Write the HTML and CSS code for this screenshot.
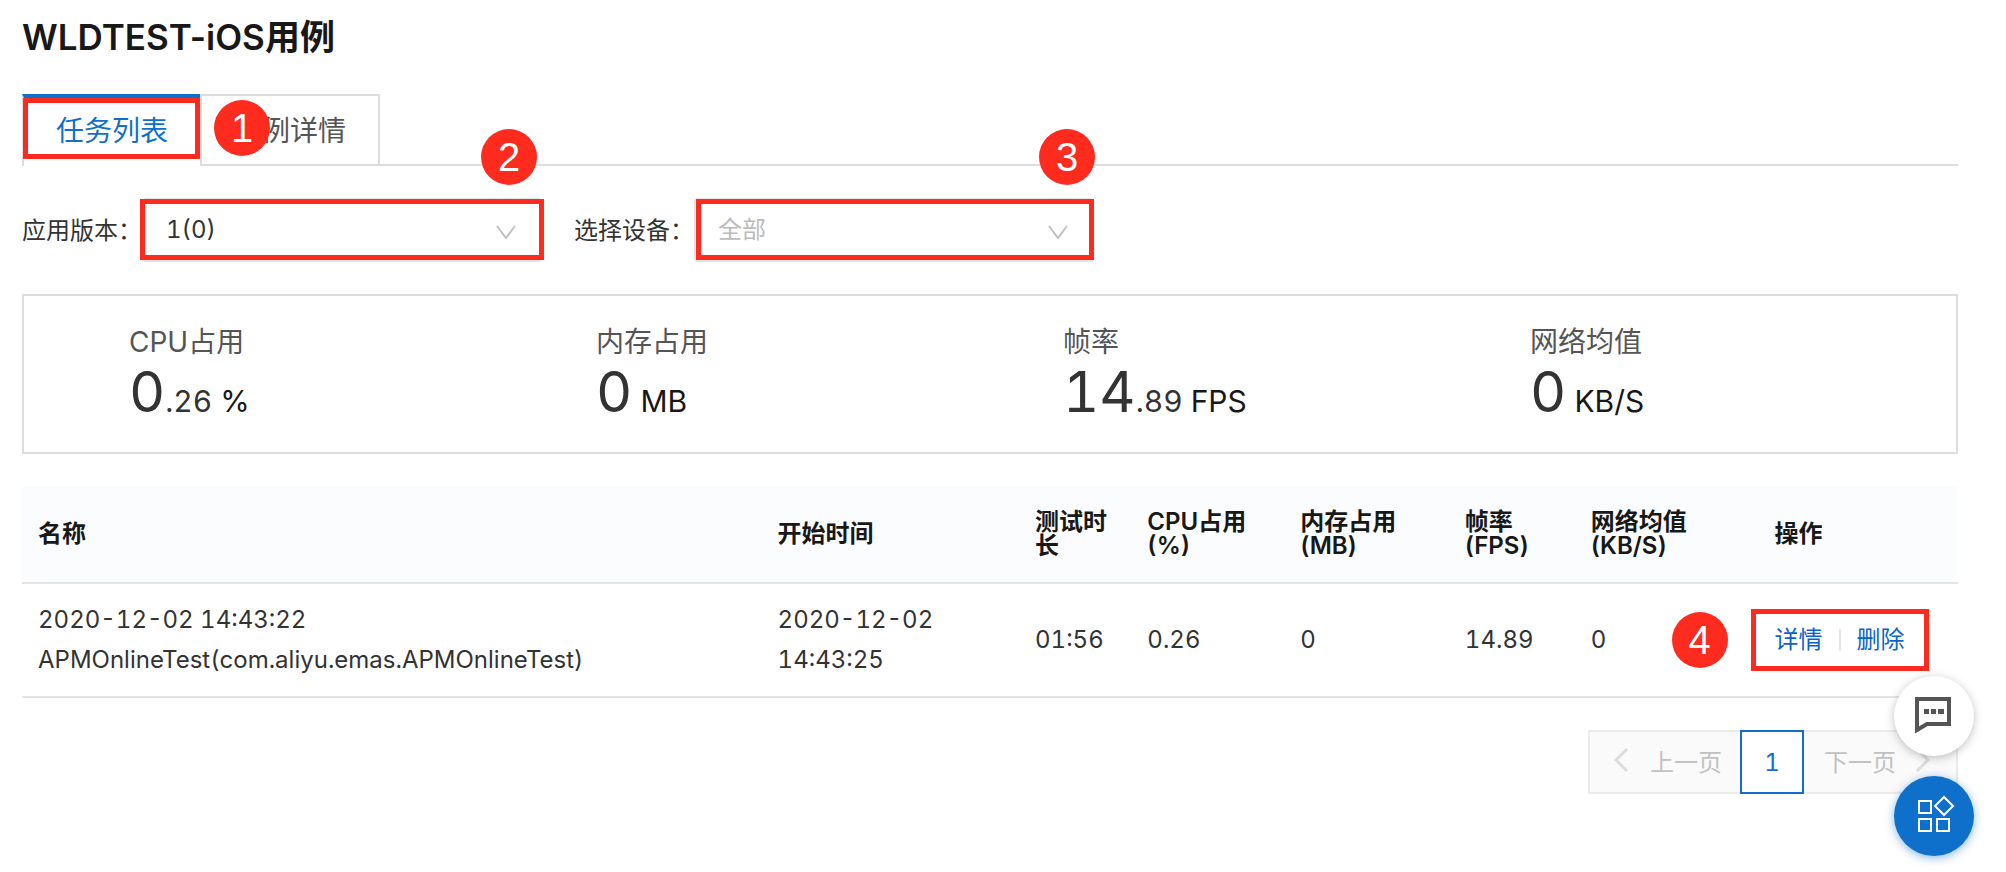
FILE: index.html
```html
<!DOCTYPE html>
<html lang="zh-CN">
<head>
    <meta charset="UTF-8">
    <meta name="viewport" content="width=device-width, initial-scale=1.0">
    <title>WLDTEST-iOS用例</title>
    <link rel="stylesheet" href="styles.css">
</head>
<body>
    <main class="page">
        <h1 class="page-title">WLDTEST-iOS用例</h1>

        <div class="tabs" role="tablist">
            <button class="tab tab-active" role="tab" aria-selected="true">任务列表<span class="mark mark-tab"></span></button>
            <button class="tab" role="tab" aria-selected="false">用例详情<span class="step step-1">1</span></button>
        </div>

        <div class="filters">
            <label class="filter-label" for="app-version">应用版本：</label>
            <div class="select-wrap">
                <select id="app-version">
                    <option>1(0)</option>
                </select>
                <svg class="chevron" viewBox="0 0 20 14"><path d="M1 1l9 12 9-12"/></svg>
                <span class="mark mark-version"></span>
                <span class="step step-2">2</span>
            </div>
            <label class="filter-label" for="device">选择设备：</label>
            <div class="select-wrap">
                <select id="device" class="placeholder">
                    <option>全部</option>
                </select>
                <svg class="chevron" viewBox="0 0 20 14"><path d="M1 1l9 12 9-12"/></svg>
                <span class="mark mark-device"></span>
                <span class="step step-3">3</span>
            </div>
        </div>

        <section class="stats">
            <div class="stat">
                <div class="stat-label">CPU占用</div>
                <div class="stat-value"><span class="stat-int">0</span>.26 <span class="stat-unit">%</span></div>
            </div>
            <div class="stat">
                <div class="stat-label">内存占用</div>
                <div class="stat-value"><span class="stat-int">0</span> <span class="stat-unit">MB</span></div>
            </div>
            <div class="stat">
                <div class="stat-label">帧率</div>
                <div class="stat-value"><span class="stat-int">14</span>.89 <span class="stat-unit">FPS</span></div>
            </div>
            <div class="stat">
                <div class="stat-label">网络均值</div>
                <div class="stat-value"><span class="stat-int">0</span> <span class="stat-unit">KB/S</span></div>
            </div>
        </section>

        <table class="task-table">
            <colgroup>
                <col class="col-name">
                <col class="col-start">
                <col class="col-duration">
                <col class="col-cpu">
                <col class="col-memory">
                <col class="col-fps">
                <col class="col-network">
                <col class="col-actions">
            </colgroup>
            <thead>
                <tr>
                    <th>名称</th>
                    <th>开始时间</th>
                    <th>测试时长</th>
                    <th>CPU占用<br>(%)</th>
                    <th>内存占用<br>(MB)</th>
                    <th>帧率<br>(FPS)</th>
                    <th>网络均值<br>(KB/S)</th>
                    <th>操作</th>
                </tr>
            </thead>
            <tbody>
                <tr>
                    <td>2020-12-02 14:43:22<br>APMOnlineTest(com.aliyu.emas.APMOnlineTest)</td>
                    <td>2020-12-02<br>14:43:25</td>
                    <td>01:56</td>
                    <td>0.26</td>
                    <td>0</td>
                    <td>14.89</td>
                    <td>0</td>
                    <td>
                        <div class="actions">
                            <a href="#">详情</a>
                            <span class="divider"></span>
                            <a href="#">删除</a>
                            <span class="mark mark-actions"></span>
                            <span class="step step-4">4</span>
                        </div>
                    </td>
                </tr>
            </tbody>
        </table>

        <nav class="pagination">
            <button class="page-btn page-prev" disabled>
                <svg class="arrow" viewBox="0 0 14 24"><path d="M13 1L2 12l11 11"/></svg>
                上一页
            </button>
            <button class="page-btn page-current">1</button>
            <button class="page-btn page-next" disabled>
                下一页
                <svg class="arrow" viewBox="0 0 14 24"><path d="M1 1l11 11L1 23"/></svg>
            </button>
        </nav>
    </main>

    <div class="float-tools">
        <button class="float-btn" aria-label="反馈">
            <svg width="36" height="36" viewBox="0 0 36 36">
                <path d="M1 1h32v25H11L1 32z" fill="none" stroke="#555" stroke-width="4"/>
                <path d="M8 11h5v5H8zM15 11h5v5h-5zM22 11h6v5h-6z" fill="#555"/>
            </svg>
        </button>
        <button class="float-btn float-btn-primary" aria-label="应用">
            <svg width="36" height="36" viewBox="0 0 36 36" fill="none" stroke="#fff" stroke-width="2">
                <path d="M3 3h12v12H3zM3 21h12v12H3zM21 21h12v12H21zM28-1l9 9-9 9-9-9z"/>
            </svg>
        </button>
    </div>
</body>
</html>
```
FILE: styles.css
```css
* {
    box-sizing: border-box;
}

body {
    margin: 0;
    background-color: #fff;
    font-family: Inter, "Noto Sans CJK SC", sans-serif;
    font-size: 24px;
    font-variant-numeric: tabular-nums;
    color: #333;
}

button,
select {
    font-family: inherit;
    font-size: inherit;
    font-variant-numeric: inherit;
    color: inherit;
}

button {
    cursor: pointer;
}

.page {
    padding: 15px 48px 0 22px;
}

.page-title {
    margin: 0 0 35px;
    font-size: 35px;
    line-height: 44px;
    font-weight: 600;
    font-variant-numeric: normal;
    color: #181818;
}

/* Tabs */
.tabs {
    display: flex;
    border-bottom: 2px solid #ddd;
}

.tab {
    position: relative;
    height: 70px;
    padding: 0 32px 2px;
    border: 2px solid #ddd;
    border-bottom: none;
    background-color: #fff;
    font-size: 28px;
    color: #555;
}

.tab-active {
    height: 72px;
    margin-bottom: -2px;
    padding-bottom: 6px;
    border-top: 4px solid #0f70cb;
    border-right: none;
    color: #0f70cb;
}

/* Red outlines and numbered steps */
.mark {
    position: absolute;
    border: 5px solid #ff2b1e;
    pointer-events: none;
}

.mark-tab {
    top: 0;
    right: 0;
    bottom: 7px;
    left: -1px;
}

.mark-version {
    inset: 1px -2px 2px -2px;
}

.mark-device {
    inset: 1px 0 2px 2px;
}

.mark-actions {
    inset: -11px -24px;
}

.step {
    position: absolute;
    z-index: 2;
    width: 56px;
    height: 56px;
    border-radius: 50%;
    background-color: #ff2b1e;
    font-family: "Liberation Sans", Arial, sans-serif;
    font-size: 40px;
    line-height: 56px;
    text-align: center;
    color: #fff;
}

.step-1 {
    top: 4px;
    left: 12px;
}

.step-2 {
    top: -69px;
    right: 5px;
}

.step-3 {
    top: -69px;
    right: -1px;
}

.step-4 {
    top: -8px;
    left: -103px;
}

/* Filters */
.filters {
    display: flex;
    align-items: center;
    margin: 32px 0;
}

.filter-label {
    width: 120px;
    padding-bottom: 4px;
}

.select-wrap {
    position: relative;
    width: 400px;
    margin-right: 32px;
}

.select-wrap select {
    display: block;
    width: 100%;
    height: 64px;
    padding: 0 22px 2px;
    border: 2px solid #e0e2e4;
    border-radius: 4px;
    background-color: #fff;
    appearance: none;
}

.select-wrap .placeholder {
    color: #bbb;
}

.chevron {
    position: absolute;
    top: 27px;
    right: 26px;
    width: 20px;
    height: 14px;
    fill: none;
    stroke: #c0c0c0;
    stroke-width: 2;
    pointer-events: none;
}

/* Stats */
.stats {
    display: flex;
    padding: 28px 32px 20px;
    border: 2px solid #ddd;
}

.stat {
    flex: 1;
    padding-left: 73px;
}

.stat-label {
    font-size: 28px;
    line-height: 36px;
    color: #555;
}

.stat-value {
    height: 72px;
    font-size: 30px;
    line-height: 64px;
}

.stat-int {
    font-size: 56px;
}

.stat-unit {
    color: #181818;
}

/* Task table */
.task-table {
    width: 100%;
    margin-top: 32px;
    border-collapse: collapse;
    table-layout: fixed;
}

.col-name {
    width: 38.2%;
}

.col-start {
    width: 13.3%;
}

.col-duration {
    width: 5.8%;
}

.col-cpu {
    width: 7.9%;
}

.col-memory {
    width: 8.5%;
}

.col-fps {
    width: 6.5%;
}

.col-network {
    width: 9.5%;
}

.col-actions {
    width: 10.3%;
}

.task-table th,
.task-table td {
    padding: 16px 0 16px 16px;
    border-bottom: 2px solid #e3e4e6;
    text-align: left;
}

.task-table th {
    height: 97px;
    padding-right: 16px;
    background-color: #fbfcfe;
    font-weight: 600;
    line-height: 24px;
    color: #181818;
}

.task-table th:nth-child(n+4) {
    padding-right: 0;
}

.task-table td {
    line-height: 40px;
}

.actions {
    position: relative;
    display: inline-flex;
    align-items: center;
}

.actions a {
    color: #0a64c8;
    text-decoration: none;
}

.divider {
    width: 2px;
    height: 22px;
    margin: 0 16px;
    background-color: #e3e4e6;
}

/* Pagination */
.pagination {
    display: flex;
    justify-content: flex-end;
    margin-top: 32px;
}

.page-btn {
    display: flex;
    align-items: center;
    justify-content: center;
    height: 64px;
    border: 2px solid #ebebeb;
    background-color: #fafafa;
}

.page-btn:disabled {
    padding-bottom: 4px;
    color: #c1c1c1;
}

.page-prev {
    gap: 22px;
    padding: 0 18px 0 24px;
    border-right: none;
}

.page-next {
    gap: 20px;
    padding: 0 26px 0 20px;
    border-left: none;
}

.page-current {
    width: 64px;
    border-color: #0f70cb;
    background-color: #fff;
    color: #0f70cb;
}

.arrow {
    width: 14px;
    height: 24px;
    fill: none;
    stroke: #ddd;
    stroke-width: 3;
}

/* Floating buttons */
.float-tools {
    position: fixed;
    right: 32px;
    bottom: 16px;
    display: flex;
    flex-direction: column;
    gap: 20px;
}

.float-btn {
    display: flex;
    align-items: center;
    justify-content: center;
    width: 80px;
    height: 80px;
    padding: 0;
    border: none;
    border-radius: 50%;
    background-color: #fff;
    box-shadow: 0 2px 10px rgba(0, 0, 0, 0.25);
}

.float-btn svg {
    overflow: visible;
}

.float-btn-primary {
    background-color: #0f70cb;
    box-shadow: 0 2px 10px rgba(15, 112, 203, 0.5);
}
```
